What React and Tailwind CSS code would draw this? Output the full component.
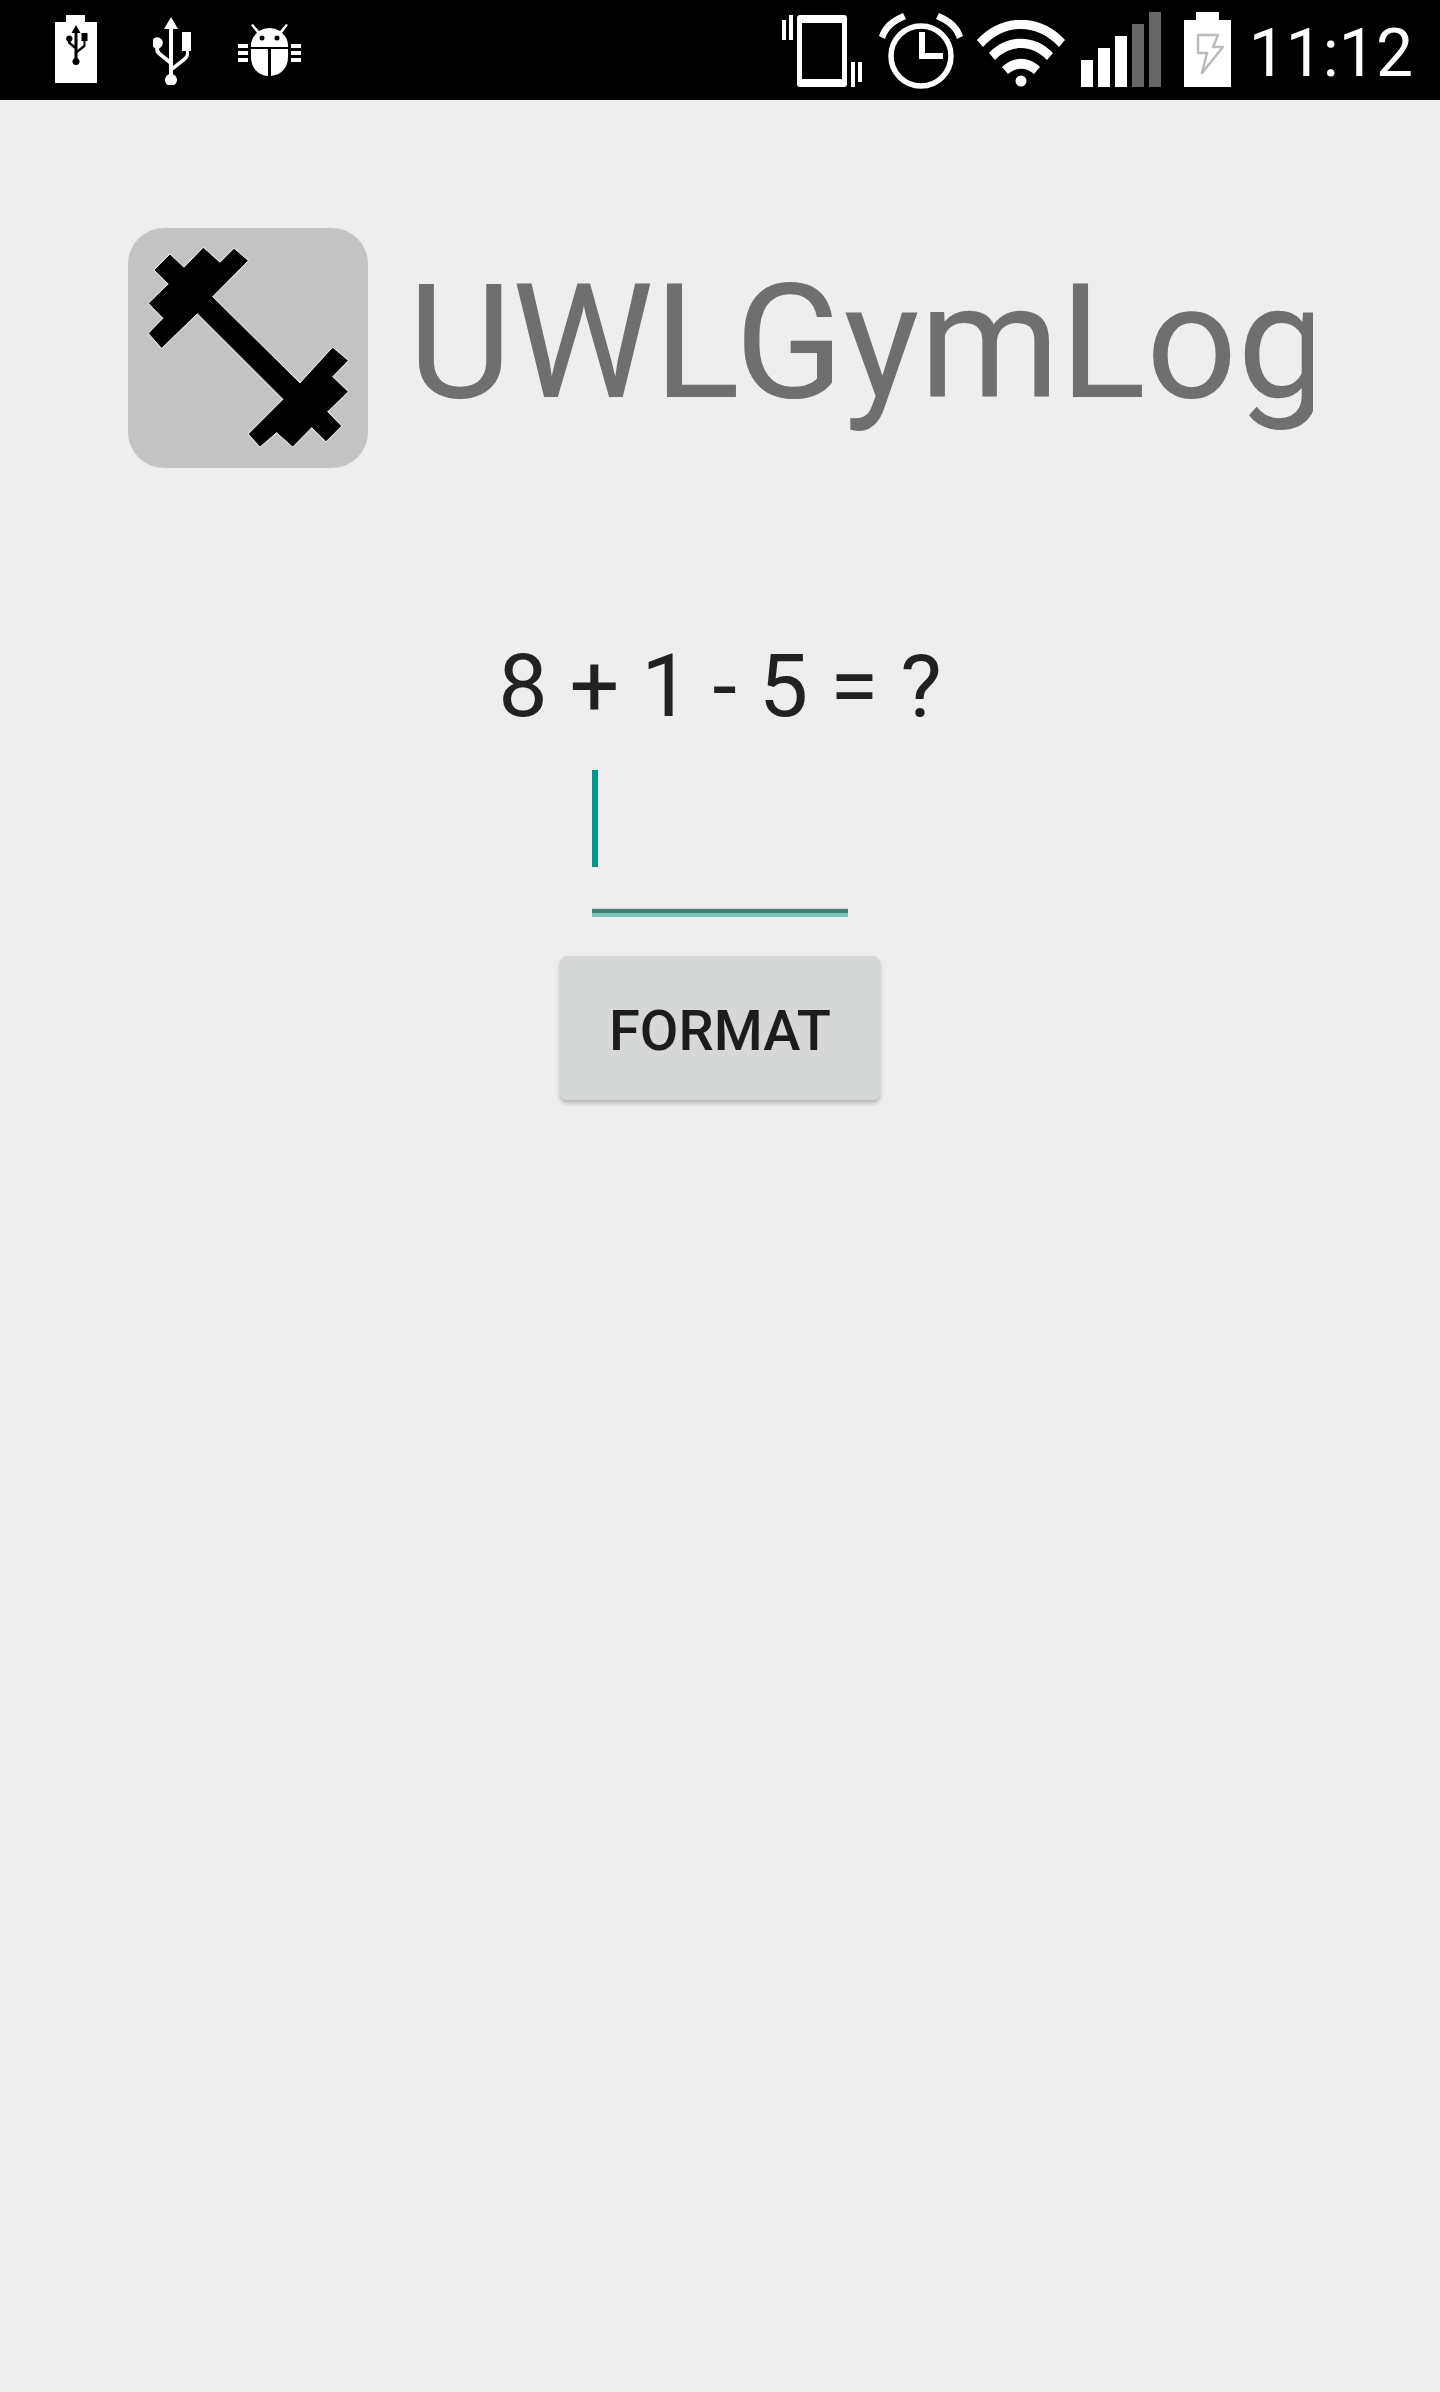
import React from 'react'

const roboto = { fontFamily: 'Roboto, sans-serif' }

function BatteryUsb() {
  return (
    <svg width="42" height="68" viewBox="0 0 42 68" className="ml-[55px] mt-[15px]">
      <path d="M11 0h19v7h12v61H0V7h11z" fill="#fff" />
      <path d="M21 10l4.500 8h-3v17l6-5v-4h-2v-8h6v8h-2v5.500l-8 6.500v5.200a3.600 3.600 0 1 1-3 0v-9.500l-6.500-5.500v-1.500a3.200 3.200 0 1 1 2.600 0v.5l3.900 3.300V18h-3z" fill="#000" />
    </svg>
  )
}

function UsbIcon() {
  return (
    <svg width="38" height="68" viewBox="0 0 38 68" className="ml-[56px] mt-[17px]">
      <path d="M18 0l7 12h-5v37l10-8c2-1.500 3-3 3-5v-2h-4V15h11v19h-4v3c0 3-2 5.500-4 7l-12 9.500v3.800a6 6 0 1 1-4 0V47L5 38c-2-1.500-2.800-3.500-2.800-6v-.8a5.600 5.600 0 1 1 4 0v.8c0 1.500.5 2.500 2 3.700l7.800 6.300V12h-5z" fill="#fff" />
    </svg>
  )
}

function BugIcon() {
  return (
    <svg width="63" height="54" viewBox="0 0 63 54" className="ml-[47px] mt-[23px]">
      <path d="M15 1l6 7a20 20 0 0 1 21 0l6-7 2 1-6 8a17 17 0 0 1 6 14H13a17 17 0 0 1 6-14l-6-8z" fill="#fff" />
      <circle cx="24" cy="15" r="2.500" fill="#000" />
      <circle cx="39" cy="15" r="2.500" fill="#000" />
      <path d="M13 26h17v27C20 52 13 45 13 34zM33 26h17v8c0 11-7 18-17 19z" fill="#fff" />
      <path d="M0 21h10v4H0zM0 28h10v4H0zM0 35h10v4H0zM53 21h10v4H53zM53 28h10v4H53zM53 35h10v4H53z" fill="#fff" />
    </svg>
  )
}

function VibrateIcon() {
  return (
    <svg width="80" height="72" viewBox="0 0 80 72">
      <path fillRule="evenodd" d="M18 0h44a3 3 0 0 1 3 3v66a3 3 0 0 1-3 3H18a3 3 0 0 1-3-3V3a3 3 0 0 1 3-3zm2 8v56h40V8z" fill="#fff" />
      <path d="M0 5h4v20H0zM7 0h4v25H7zM69 47h4v25h-4zM76 47h4v20h-4z" fill="#fff" />
    </svg>
  )
}

function AlarmIcon() {
  return (
    <svg width="84" height="76" viewBox="0 0 84 76" className="ml-[17px]">
      <circle cx="42" cy="43" r="30" fill="none" stroke="#fff" strokeWidth="5.500" />
      <path d="M40 20h6v21h18v6H40z" fill="#fff" transform="translate(0 -1)" />
      <path d="M0 23C3 13 10 6 24 0l3 6C15 11 9 17 6 26zM84 23C81 13 74 6 60 0l-3 6c12 5 18 11 21 20z" fill="#fff" />
    </svg>
  )
}

function WifiIcon() {
  return (
    <svg width="88" height="67" viewBox="0 0 88 67" className="ml-[14px] mt-[7px]">
      <path d="M0 20C24-7 64-7 88 20l-6 7C60 3 28 3 6 27z" fill="#fff" />
      <path d="M12 33c18-19 46-19 64 0l-6 7C55 24 33 24 18 40z" fill="#fff" />
      <path d="M25 47c11-11 27-11 38 0l-6 7c-8-7-18-7-26 0z" fill="#fff" />
      <circle cx="44" cy="61" r="5.500" fill="#fff" />
    </svg>
  )
}

function SignalIcon() {
  return (
    <svg width="80" height="75" viewBox="0 0 80 75" className="ml-[16px] mt-[12px]">
      <rect x="0" y="48" width="12" height="27" fill="#fff" />
      <rect x="17" y="36" width="12" height="39" fill="#fff" />
      <rect x="34" y="24" width="12" height="51" fill="#fff" />
      <rect x="51" y="12" width="12" height="63" fill="#666" />
      <rect x="68" y="0" width="12" height="75" fill="#666" />
    </svg>
  )
}

function BatteryCharging() {
  return (
    <svg width="47" height="75" viewBox="0 0 47 75" className="ml-[23px] mt-[12px]">
      <path d="M12 0h23v8h12v67H0V8h12z" fill="#fff" />
      <path d="M14 23h20l-5 12h10L18 61l5-20h-9z" fill="none" stroke="#bbb" strokeWidth="2.500" strokeLinejoin="round" />
    </svg>
  )
}

function StatusBar() {
  return (
    <div className="flex h-[100px] bg-black" style={roboto}>
      <div className="flex items-start">
        <BatteryUsb />
        <UsbIcon />
        <BugIcon />
      </div>
      <div className="ml-auto flex items-start pt-[13px]">
        <div className="mt-[2px]"><VibrateIcon /></div>
        <AlarmIcon />
      </div>
      <div className="flex items-start pt-[13px]">
        <WifiIcon />
      </div>
      <div className="flex items-start">
        <SignalIcon />
        <BatteryCharging />
        <span className="ml-[18px] mr-[27px] mt-[15px] text-[66px] leading-[77px] font-normal text-white">11:12</span>
      </div>
    </div>
  )
}

const barbell = 'M180 135L222 175L280 115L330 160L372 118L412 152L305 260L570 522L668 415L712 452L665 500L712 545L650 605L692 648L648 692L605 650L548 708L500 665L450 708L418 672L522 568L262 308L155 412L118 370L162 325L118 280L178 222L135 180Z'

function AppIcon() {
  return (
    <div className="h-[240px] w-[240px] shrink-0 rounded-[36px] bg-[#c3c3c3]">
      <svg width="240" height="240" viewBox="54 54 720 720">
        <path d={barbell} fill="none" stroke="#fff" strokeOpacity="0.45" strokeWidth="9" strokeLinejoin="round" />
        <path d={barbell} fill="#000" stroke="#000" strokeWidth="3" strokeLinejoin="round" />
      </svg>
    </div>
  )
}

export default function App() {
  return (
    <div className="min-h-[2392px] bg-[#eeeeee]" style={roboto}>
      <StatusBar />

      <div className="ml-[128px] mt-[128px] flex w-[1185px] items-center gap-[40px] overflow-hidden">
        <AppIcon />
        <span className="mb-[12px] whitespace-nowrap text-[160px] leading-[197px] text-[#6f6f6f]">UWLGymLog</span>
      </div>

      <div className="mt-[165px] flex flex-col items-center">
        <div className="text-[88px] leading-[105px] text-[#212121]">8 + 1 - 5 = ?</div>
        <div className="mt-[32px] flex h-[147px] w-[256px] flex-col justify-between">
          <div className="h-[97px] w-[6px] bg-[#009688]" />
          <div className="border-t border-[#d5d5d5]">
            <div className="h-[4px] bg-[#3e8379]" />
            <div className="h-[4px] bg-[#7cc5bc]" />
          </div>
        </div>
        <button className="mt-[39px] h-[144px] w-[320px] rounded-[7px] bg-[#d6d7d7] pt-[6px] text-[56px] font-medium text-[#1c1c1c] shadow-[0_3px_4px_rgba(0,0,0,0.25)]">
          FORMAT
        </button>
      </div>
    </div>
  )
}
